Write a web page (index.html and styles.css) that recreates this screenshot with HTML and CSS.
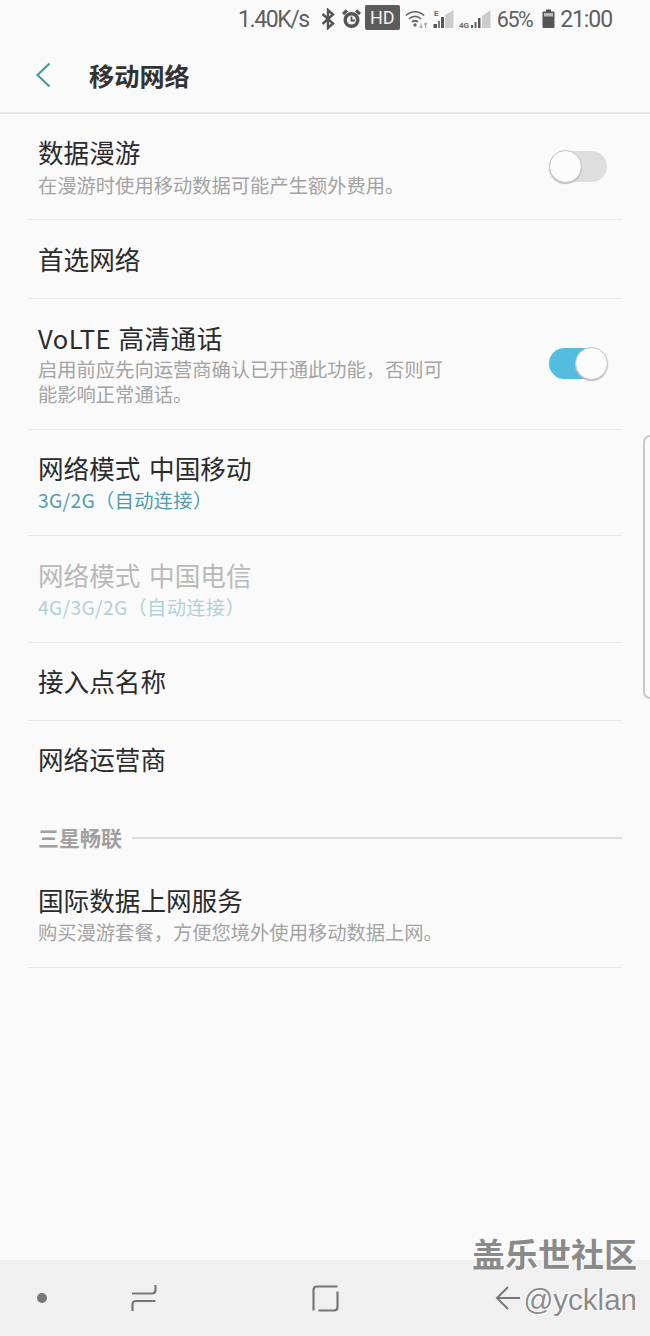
FILE: index.html
```html
<!DOCTYPE html>
<html lang="zh-CN">
<head>
<meta charset="utf-8">
<title>移动网络</title>
<link rel="stylesheet" href="styles.css">
</head>
<body>
<div class="screen">
  <div class="status">
    <span class="st-text st-speed">1.40K/s</span>
    <svg class="ic ic-bt" width="14" height="22" viewBox="0 0 14 22"><path d="M1.500 6 L12 15.500 L7 20 V2 L12 6.500 L1.500 16" fill="none" stroke="#555" stroke-width="2.400"/></svg>
    <svg class="ic ic-alarm" width="19" height="20" viewBox="0 0 19 20"><circle cx="9.500" cy="11" r="8" fill="#555"/><circle cx="9.500" cy="11" r="4.600" fill="#f4f4f4"/><path d="M9.500 7.500 V11.500 H13" fill="none" stroke="#555" stroke-width="1.800"/><path d="M1 5 L5 1.500 M18 5 L14 1.500" stroke="#555" stroke-width="3"/></svg>
    <span class="hd">HD</span>
    <svg class="ic ic-wifi" width="24" height="20" viewBox="0 0 24 20"><path d="M1 6.500 C6 1.500 14 1.500 19 6.500 M4 10 C7.500 6.500 12.500 6.500 16 10 M7 13 C8.800 11.500 11.200 11.500 13 13" fill="none" stroke="#666" stroke-width="1.700"/><circle cx="10" cy="16" r="1.700" fill="#666"/><path d="M16 14 V19 M14.500 17.500 L16 19 L17.500 17.500 M20.500 19 V14 M19 15.500 L20.500 14 L22 15.500" fill="none" stroke="#aaa" stroke-width="1.100"/></svg>
    <svg class="ic ic-sig1" width="21" height="20" viewBox="0 0 21 20"><text class="sig-label" x="1" y="7">E</text><rect x="0.500" y="15" width="3.500" height="4" fill="#555"/><rect x="5" y="12" width="2" height="7" fill="#777"/><rect x="8" y="8" width="3" height="11" fill="#555"/><path d="M12 19 V6 L20.500 1 V19 Z" fill="#ccc"/></svg>
    <svg class="ic ic-sig2" width="32" height="20" viewBox="0 0 32 20"><text class="sig-label" x="0" y="19">4G</text><rect x="12" y="16" width="2" height="3" fill="#555"/><rect x="15.500" y="13" width="2" height="6" fill="#666"/><rect x="19" y="9" width="2.500" height="10" fill="#555"/><path d="M23 19 V7 L31.500 1 V19 Z" fill="#ccc"/></svg>
    <span class="st-text st-pct">65%</span>
    <svg class="ic ic-batt" width="13" height="20" viewBox="0 0 13 20"><rect x="4" y="0.500" width="5" height="2.500" fill="#555"/><rect x="0.500" y="2.500" width="12" height="16.500" rx="1" fill="#555"/><rect x="2" y="4" width="9" height="3.500" fill="#bbb"/></svg>
    <span class="st-text st-time">21:00</span>
  </div>

  <header class="appbar">
    <svg class="back" width="16" height="26" viewBox="0 0 16 26"><path d="M14.500 1.500 L2.500 13 L14.500 24.500" fill="none" stroke="#4a9aa8" stroke-width="2.200"/></svg>
    <h1 class="appbar-title">移动网络</h1>
  </header>

  <main class="list">
    <div class="row row-sub row-first">
      <div class="row-body">
        <div class="title">数据漫游</div>
        <div class="sub sub-first">在漫游时使用移动数据可能产生额外费用。</div>
      </div>
      <span class="switch"><span class="knob"></span></span>
    </div>
    <div class="row row-plain"><div class="title">首选网络</div></div>
    <div class="row row-tall">
      <div class="row-body">
        <div class="title title-latin">VoLTE 高清通话</div>
        <div class="sub sub-wrap">启用前应先向运营商确认已开通此功能，否则可能影响正常通话。</div>
      </div>
      <span class="switch switch-on"><span class="knob"></span></span>
    </div>
    <div class="row row-sub row-mode">
      <div class="row-body">
        <div class="title">网络模式 中国移动</div>
        <div class="sub sub-accent">3G/2G（自动连接）</div>
      </div>
    </div>
    <div class="row row-sub row-disabled">
      <div class="row-body">
        <div class="title">网络模式 中国电信</div>
        <div class="sub sub-accent">4G/3G/2G（自动连接）</div>
      </div>
    </div>
    <div class="row row-plain row-short"><div class="title">接入点名称</div></div>
    <div class="row row-plain row-last"><div class="title">网络运营商</div></div>
    <div class="section"><span class="section-label">三星畅联</span><span class="section-line"></span></div>
    <div class="row row-sub row-service">
      <div class="row-body">
        <div class="title">国际数据上网服务</div>
        <div class="sub sub-service">购买漫游套餐，方便您境外使用移动数据上网。</div>
      </div>
    </div>
  </main>

  <nav class="navbar">
    <span class="nav-dot"></span>
    <svg class="nav-recent" width="26" height="28" viewBox="0 0 26 28"><path d="M1 9.500 H21 Q24.500 9.500 24.500 6 V1 M24.500 17 H5 Q1.500 17 1.500 20.500 V27" fill="none" stroke="#777" stroke-width="2.200"/></svg>
    <svg class="nav-home" width="27" height="27" viewBox="0 0 27 27"><path d="M25.500 1.500 H5 Q1.500 1.500 1.500 5 V25.500 M6.500 25.500 H22 Q25.500 25.500 25.500 22 V6.500" fill="none" stroke="#777" stroke-width="2.200"/></svg>
    <svg class="nav-back" width="26" height="26" viewBox="0 0 26 26"><path d="M13 2 L2 13 L13 24 M2 13 H25" fill="none" stroke="#777" stroke-width="2"/></svg>
  </nav>

  <div class="edge-handle"></div>
  <div class="watermark">
    <div class="wm-main">盖乐世社区</div>
    <div class="wm-sub">@ycklan</div>
  </div>
</div>
</body>
</html>
```
FILE: styles.css
```css
* { box-sizing: border-box; margin: 0; padding: 0; }
html, body { width: 650px; height: 1336px; overflow: hidden; }
body {
  background: #fafafa;
  font-family: "Noto Sans CJK SC", "Noto Sans", Roboto, sans-serif;
}
.screen {
  position: relative;
  width: 650px;
  height: 1336px;
  display: flex;
  flex-direction: column;
  background: #fafafa;
}

/* status bar */
.status {
  height: 38px;
  flex: none;
  display: flex;
  align-items: center;
  justify-content: flex-end;
  padding-right: 38px;
  color: #5a5a5a;
}
.st-text { margin-top: 2px; font: 23px/38px Roboto, sans-serif; letter-spacing: -1.1px; color: #5f5f5f; }
.st-speed { margin-right: 12px; letter-spacing: -1.4px; }
.ic { display: block; flex: none; }
.ic-alarm { margin-left: 7px; }
.hd {
  width: 35px;
  height: 25px;
  margin: -3px 0 0 4px;
  border-radius: 2px;
  background: #5c5c5c;
  color: #f0f0f0;
  font: 18px/25px Roboto, sans-serif;
  text-align: center;
}
.ic-wifi { margin-left: 5px; }
.ic-sig1 { margin-left: 4px; }
.ic-sig2 { margin-left: 5px; }
.sig-label { font: bold 8px Roboto, sans-serif; fill: #666; }
.st-pct { margin-left: 6px; font-size: 21.5px; letter-spacing: -1.5px; }
.ic-batt { margin-left: 10px; }
.st-time { margin-left: 5px; }

/* app bar */
.appbar {
  height: 76px;
  flex: none;
  display: flex;
  align-items: center;
  padding-left: 35px;
  border-bottom: 2px solid #e6e6e6;
}
.appbar-title {
  margin-left: 38px;
  font-size: 25.2px;
  line-height: 36px;
  font-weight: 700;
  color: #333;
}

/* list */
.list {
  flex: 1;
  display: flex;
  flex-direction: column;
  padding: 0 28px;
}
.row {
  display: flex;
  align-items: center;
  padding: 0 10px;
  border-bottom: 1px solid #e8e8e8;
}
.row-sub { height: 106px; padding-bottom: 1px; }
.row-first { padding-bottom: 1px; }
.row-mode { padding-bottom: 2px; }
.row-disabled { height: 107px; padding-bottom: 0; }
.row-plain { height: 79px; }
.row-short { height: 78px; padding-bottom: 2px; }
.row-tall { height: 131px; padding-bottom: 1px; }
.row-last { height: 79px; padding-bottom: 4px; border-bottom: 0; }
.row-service { height: 104px; margin-top: -1px; padding-bottom: 3px; }
.row-body { flex: 1; min-width: 0; }
.title {
  font-size: 25.6px;
  line-height: 36px;
  word-spacing: 3px;
  color: #2b2b2b;
}
.title-latin { letter-spacing: 0.5px; word-spacing: 1px; }
.sub {
  font-size: 19.3px;
  line-height: 27px;
  color: #a3a3a3;
}
.sub-first { margin-top: 2px; }
.sub-wrap { width: 412px; margin-top: 1px; line-height: 25px; }
.sub-accent { margin-top: 1px; letter-spacing: 0.3px; color: #4d9cad; }
.sub-service { margin-top: 1px; }
.row-disabled .title { color: #b9b9b9; }
.row-disabled .sub-accent { color: #aed0d9; }

/* switches */
.switch {
  position: relative;
  display: block;
  flex: none;
  width: 58px;
  height: 31px;
  margin: 1px 5px 0 0;
  border-radius: 16px;
  background: #dedede;
}
.knob {
  position: absolute;
  top: -1px;
  left: 0;
  width: 33px;
  height: 33px;
  border-radius: 50%;
  background: #fcfcfc;
  border: 1px solid #c4c4c4;
  box-shadow: 0 1px 1px #bbb;
}
.switch-on { margin-top: 0; background: #52bde0; }
.switch-on .knob { left: 26px; }

/* section */
.section {
  height: 65px;
  display: flex;
  align-items: center;
  padding: 11px 0 0 10px;
  gap: 10px;
}
.section-label {
  margin-top: -3px;
  font-size: 21px;
  font-weight: 700;
  line-height: 28px;
  color: #a0a0a0;
}
.section-line { flex: 1; height: 2px; background: #dcdcdc; }

/* nav bar */
.navbar {
  position: relative;
  height: 76px;
  flex: none;
  display: flex;
  align-items: center;
  padding-left: 37px;
  background: #f0f0f0;
}
.nav-dot { width: 10px; height: 10px; border-radius: 50%; background: #777; }
.nav-recent { margin-left: 84px; }
.nav-home { margin-left: 155px; }
.nav-back { margin-left: 156px; }

/* overlays */
.edge-handle {
  position: absolute;
  top: 435px;
  right: 0;
  width: 7px;
  height: 264px;
  border: 2px solid #c8c8c8;
  border-right: 0;
  border-radius: 7px 0 0 7px;
}
.watermark {
  position: absolute;
  top: 1233px;
  right: 13px;
  text-align: right;
  color: #8a8a8a;
  text-shadow: 1px 1px 0 #fff, -1px 0 0 #fff;
}
.wm-main {
  font-size: 33px;
  line-height: 40px;
  font-weight: 700;
}
.wm-sub {
  font-family: "Liberation Sans", sans-serif;
  font-size: 29.5px;
  line-height: 40px;
  margin-top: 7px;
}
```
